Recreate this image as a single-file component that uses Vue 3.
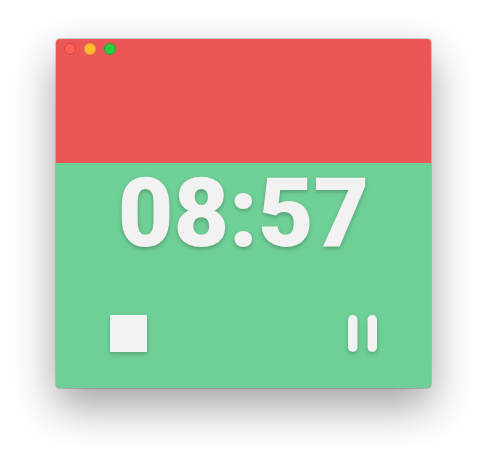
<script setup>
import { computed, ref } from 'vue'

const seconds = ref(537)
const total = 833
const clock = computed(() => {
  const m = String(Math.floor(seconds.value / 60)).padStart(2, '0')
  const s = String(seconds.value % 60).padStart(2, '0')
  return `${m}:${s}`
})
const remaining = computed(() => `${(seconds.value / total) * 100}%`)
</script>

<template>
  <main class="desktop">
    <section class="window">
      <div class="fill" :style="{ height: remaining }"></div>
      <header class="titlebar">
        <button class="dot close" aria-label="Close"></button>
        <button class="dot minimize" aria-label="Minimize"></button>
        <button class="dot zoom" aria-label="Zoom"></button>
      </header>
      <time class="clock">{{ clock }}</time>
      <footer class="controls">
        <button class="control" aria-label="Stop">
          <svg width="37" height="37" viewBox="0 0 37 37"><rect width="37" height="37" fill="#f2f2f2" /></svg>
        </button>
        <button class="control" aria-label="Pause">
          <svg width="30" height="37" viewBox="0 0 30 37" fill="#f2f2f2">
            <rect x="1" width="9.5" height="37" rx="4.7" />
            <rect x="20.5" width="9.5" height="37" rx="4.7" />
          </svg>
        </button>
      </footer>
    </section>
  </main>
</template>

<style>
body {
  background: #fff;
}
</style>

<style scoped>
.desktop {
  box-sizing: border-box;
  min-height: 100vh;
  padding: 39px 56px 74px;
  display: flex;
}
.window {
  position: relative;
  isolation: isolate;
  flex: 1;
  display: flex;
  flex-direction: column;
  overflow: hidden;
  border-radius: 4px;
  background: #eb5757;
  box-shadow: 0 0 0 1px rgba(0, 0, 0, 0.12), 0 0 2px rgba(0, 0, 0, 0.12), 0 18px 44px rgba(0, 0, 0, 0.38);
}
.fill {
  position: absolute;
  z-index: -1;
  right: 0;
  bottom: 0;
  left: 0;
  background: #6fd097;
}
.titlebar {
  display: flex;
  gap: 8px;
  padding: 4px 8px;
}
.dot {
  width: 12px;
  height: 12px;
  padding: 0;
  border: 1px solid #e0443e;
  border-radius: 50%;
  background: #ff5f57;
}
.minimize {
  border-color: #e5a02c;
  background: #fdbc2e;
}
.zoom {
  border-color: #1fa833;
  background: #28cd41;
}
.clock {
  margin-top: 96px;
  color: #f2f2f2;
  font: 900 96px/116px Roboto, sans-serif;
  text-align: center;
  text-shadow: 0 2px 4px rgba(0, 0, 0, 0.25);
}
.controls {
  display: flex;
  justify-content: space-between;
  margin-top: auto;
  padding: 0 54px 36px;
}
.control {
  display: flex;
  padding: 0;
  border: 0;
  background: none;
  filter: drop-shadow(0 2px 2px rgba(0, 0, 0, 0.22));
}
</style>
